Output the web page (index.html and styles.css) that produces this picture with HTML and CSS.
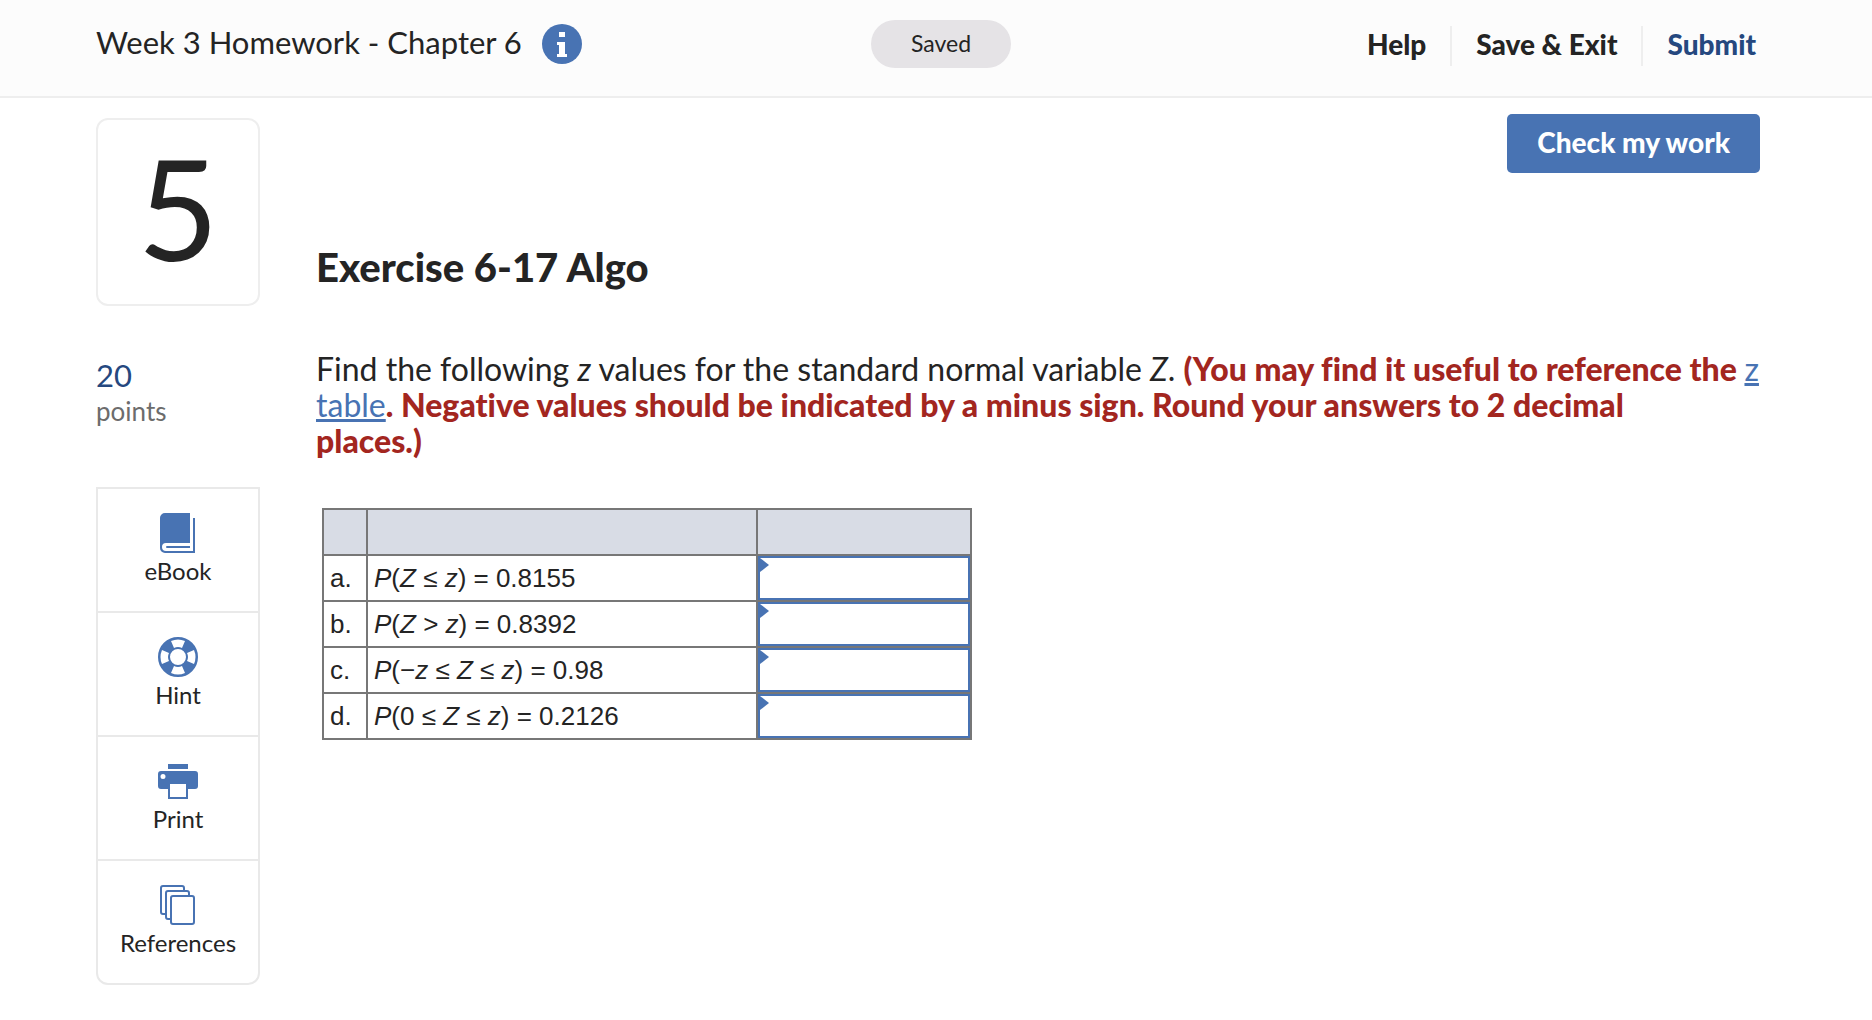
FILE: index.html
```html
<!DOCTYPE html>
<html lang="en">
<head>
    <meta charset="UTF-8">
    <meta name="viewport" content="width=device-width, initial-scale=1.0">
    <title>Week 3 Homework - Chapter 6</title>
    <link rel="stylesheet" href="styles.css">
</head>
<body>
    <header class="header">
        <div class="assignment">
            <h1>Week 3 Homework - Chapter 6</h1>
            <button class="info-btn" aria-label="Assignment info">
                <svg width="40" height="40" viewBox="0 0 40 40">
                    <circle cx="20" cy="20" r="20" fill="#4873b3"/>
                    <path fill="#fff" d="M17 8h6v5h-6zM15 18h8v12h2v3H15v-3h2v-9h-2z"/>
                </svg>
            </button>
        </div>
        <div class="status">Saved</div>
        <nav class="header-nav">
            <a href="#">Help</a>
            <a href="#">Save &amp; Exit</a>
            <a href="#" class="submit">Submit</a>
        </nav>
    </header>

    <div class="page">
        <!-- Question number, points and tools -->
        <aside class="sidebar">
            <div class="question-number">5</div>
            <div class="points">
                <div class="points-value">20</div>
                <div class="points-label">points</div>
            </div>
            <div class="tools">
                <button class="tool">
                    <svg width="40" height="40" viewBox="0 0 40 40" fill="#4873b3">
                        <path d="M7 0H32V30H8a4 4 0 0 0 0 8H35V5h2V40H7a5 5 0 0 1-5-5V5a5 5 0 0 1 5-5z"/>
                        <path d="M9 33H32v2H9a1 1 0 0 1 0-2z"/>
                    </svg>
                    <span>eBook</span>
                </button>
                <button class="tool">
                    <svg width="40" height="40" viewBox="0 0 40 40">
                        <circle cx="20" cy="20" r="14" fill="none" stroke="#4873b3" stroke-width="12"/>
                        <g fill="#fff">
                            <path id="ring" d="M13 4Q20 1 27 4L24 11Q20 9 16 11z"/>
                            <use href="#ring" transform="rotate(90 20 20)"/>
                            <use href="#ring" transform="rotate(180 20 20)"/>
                            <use href="#ring" transform="rotate(270 20 20)"/>
                        </g>
                    </svg>
                    <span>Hint</span>
                </button>
                <button class="tool">
                    <svg width="40" height="40" viewBox="0 0 40 40" fill="#4873b3">
                        <path d="M10 3H30V8H10z"/>
                        <path fill-rule="evenodd" d="M3 10H37a3 3 0 0 1 3 3V25a3 3 0 0 1-3 3H30V38H10V28H3a3 3 0 0 1-3-3V13a3 3 0 0 1 3-3zM12 23V36H28V23zM5 13a2 2 0 0 0 0 5a2 2 0 0 0 0-5z"/>
                    </svg>
                    <span>Print</span>
                </button>
                <button class="tool">
                    <svg width="40" height="40" viewBox="0 0 40 40" fill="#fff" stroke="#4873b3" stroke-width="2">
                        <rect x="3" y="1" width="23" height="28" rx="2"/>
                        <rect x="8" y="6" width="23" height="28" rx="2"/>
                        <rect x="13" y="11" width="23" height="28" rx="2"/>
                    </svg>
                    <span>References</span>
                </button>
            </div>
        </aside>

        <main class="question">
            <button class="check-btn">Check my work</button>
            <h2>Exercise 6-17 Algo</h2>
            <p class="prompt">Find the following <i>z</i> values for the standard normal variable <i>Z</i>. <b>(You may find it useful to reference the </b><a href="#">z table</a><b>. Negative values should be indicated by a minus sign. Round your answers to 2 decimal<br>places.)</b></p>

            <table class="answers">
                <thead>
                    <tr><th class="col-letter"></th><th class="col-formula"></th><th class="col-answer"></th></tr>
                </thead>
                <tbody>
                    <tr>
                        <td>a.</td>
                        <td><label for="answer-a"><i>P</i>(<i>Z</i> ≤ <i>z</i>) = 0.8155</label></td>
                        <td class="answer"><input type="text" id="answer-a"></td>
                    </tr>
                    <tr>
                        <td>b.</td>
                        <td><label for="answer-b"><i>P</i>(<i>Z</i> &gt; <i>z</i>) = 0.8392</label></td>
                        <td class="answer"><input type="text" id="answer-b"></td>
                    </tr>
                    <tr>
                        <td>c.</td>
                        <td><label for="answer-c"><i>P</i>(−<i>z</i> ≤ <i>Z</i> ≤ <i>z</i>) = 0.98</label></td>
                        <td class="answer"><input type="text" id="answer-c"></td>
                    </tr>
                    <tr>
                        <td>d.</td>
                        <td><label for="answer-d"><i>P</i>(0 ≤ <i>Z</i> ≤ <i>z</i>) = 0.2126</label></td>
                        <td class="answer"><input type="text" id="answer-d"></td>
                    </tr>
                </tbody>
            </table>
        </main>
    </div>
</body>
</html>
```
FILE: styles.css
```css
* {
    box-sizing: border-box;
}

body {
    margin: 0;
    background-color: #fff;
    color: #242424;
    font-family: Lato, "Open Sans", sans-serif;
    font-size: 24px;
    font-variant-ligatures: none;
}

button {
    font-family: inherit;
    color: inherit;
    cursor: pointer;
}

.header {
    display: grid;
    grid-template-columns: 1fr auto 1fr;
    align-items: center;
    padding: 0 86px 8px 96px;
    height: 98px;
    background-color: #fcfcfc;
    border-bottom: 2px solid #eee;
}

.assignment {
    display: flex;
    align-items: center;
    gap: 20px;
}

.assignment h1 {
    margin: 0;
    padding-bottom: 4px;
    font-size: 31px;
    font-weight: 400;
}

.info-btn {
    display: flex;
    padding: 0;
    border: none;
    background: none;
}

.status {
    height: 48px;
    padding: 0 40px;
    border-radius: 24px;
    background-color: #e5e3e6;
    font-size: 23px;
    line-height: 46px;
}

.header-nav {
    display: flex;
    justify-content: flex-end;
    margin-top: 4px;
    padding-right: 6px;
}

.header-nav a {
    padding: 0 24px 4px;
    color: #242424;
    font-size: 28px;
    font-weight: 900;
    line-height: 36px;
    text-decoration: none;
}

.header-nav a + a {
    border-left: 2px solid #eee;
}

.header-nav .submit {
    color: #25487f;
}

.page {
    display: flex;
    gap: 56px;
    padding: 20px 96px 34px;
}

.sidebar {
    flex: none;
    width: 164px;
}

.question-number {
    height: 188px;
    border: 2px solid #eee;
    border-radius: 12px;
    font-size: 140px;
    line-height: 174px;
    text-align: center;
}

.points {
    margin: 50px 0 58px;
}

.points-value {
    color: #25487f;
    font-size: 31px;
    line-height: 38px;
}

.points-label {
    color: #6c6c6c;
    font-size: 26px;
    line-height: 35px;
}

.tools {
    border: 2px solid #e9e9e9;
    border-radius: 0 0 12px 12px;
}

.tool {
    display: flex;
    flex-direction: column;
    align-items: center;
    gap: 4px;
    width: 100%;
    height: 122px;
    padding: 24px 0 0;
    border: none;
    background: none;
    font-size: 24px;
    line-height: 28px;
}

.tool + .tool {
    height: 124px;
    border-top: 2px solid #e9e9e9;
}

.question {
    flex: 1;
    display: flex;
    flex-direction: column;
    align-items: flex-start;
}

.check-btn {
    align-self: flex-end;
    margin: -4px 16px 0 0;
    padding: 0 30px 4px;
    height: 59px;
    border: none;
    border-radius: 5px;
    background-color: #4873b3;
    color: #fff;
    font-size: 28px;
    font-weight: 900;
}

.question h2 {
    margin: 70px 0 60px;
    font-size: 40px;
    font-weight: 900;
    line-height: 48px;
}

.prompt {
    margin: 0 0 49px;
    font-size: 32px;
    line-height: 36px;
}

.prompt b {
    color: #a3261f;
    font-weight: 900;
}

.prompt a {
    color: #4873b3;
}

.answers {
    margin-left: 6px;
    border-collapse: collapse;
    font-family: "Liberation Sans", Arial, sans-serif;
    font-size: 26px;
}

.answers th,
.answers td {
    height: 46px;
    padding: 0 6px;
    border: 2px solid #777;
}

.answers th {
    background-color: #d8dce5;
}

.col-letter {
    width: 44px;
}

.col-formula {
    width: 390px;
}

.col-answer {
    width: 214px;
}

/* blue marker in the corner of each answer cell */
.answers .answer {
    position: relative;
    padding: 0;
}

.answer::before {
    content: "";
    position: absolute;
    top: 2px;
    left: 2px;
    border: 7px solid transparent;
    border-left: 9px solid #4873b3;
    border-right: none;
}

.answer input {
    display: block;
    width: 100%;
    height: 44px;
    padding: 0 14px;
    border: 2px solid #4873b3;
    background-color: #fff;
    font: inherit;
}
```
